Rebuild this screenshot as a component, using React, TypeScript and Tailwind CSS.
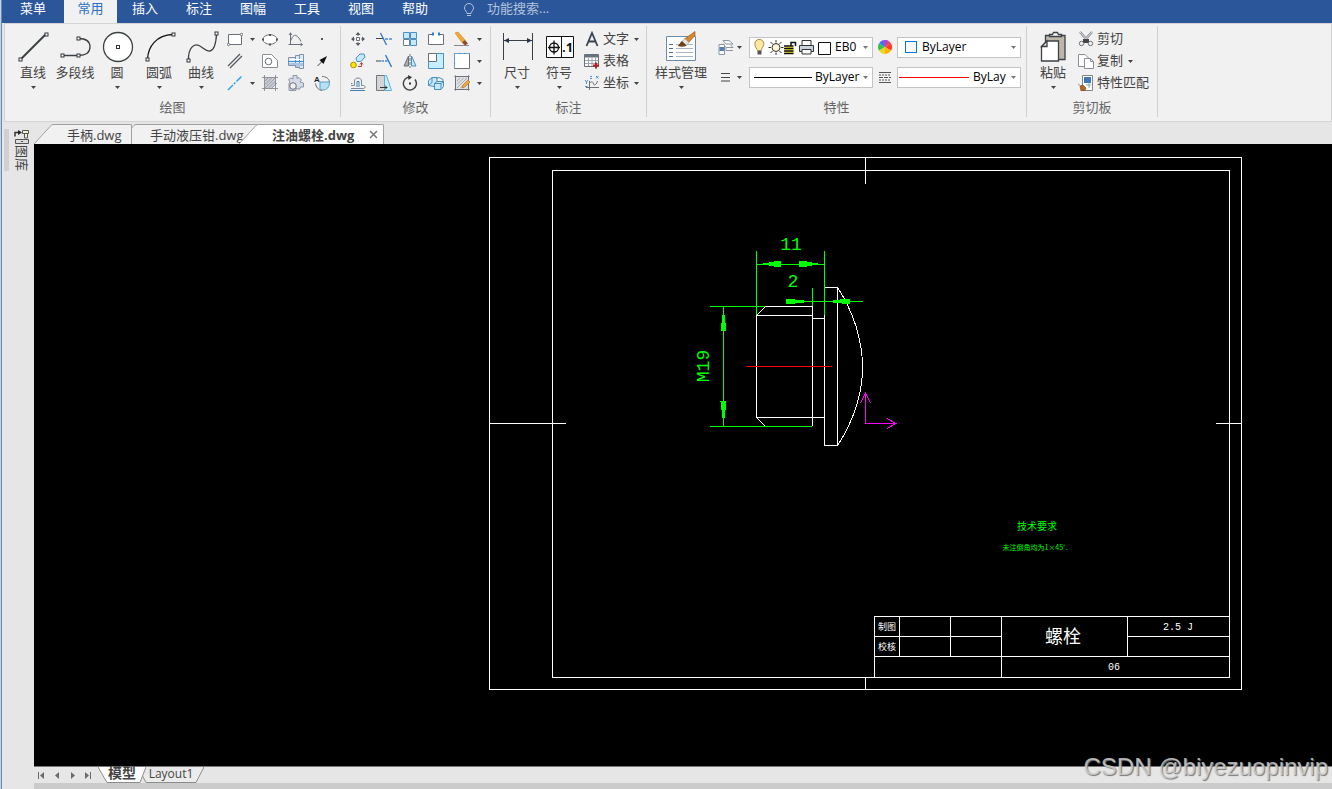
import type { ReactNode } from "react";

const MENUS = ["插入", "标注", "图幅", "工具", "视图", "帮助"];

/* ---------- shared bits ---------- */

function Caret({ className = "text-[#444]" }: { className?: string }) {
  return (
    <svg width="5" height="3" viewBox="0 0 5 3" className={`shrink-0 ${className}`} aria-hidden="true">
      <path d="M0 0h5L2.5 3z" fill="currentColor" />
    </svg>
  );
}

function Small({ children }: { children: ReactNode }) {
  return (
    <svg width="16" height="16" viewBox="0 0 16 16" fill="none" stroke="#6b7078" strokeWidth="1" className="shrink-0">
      {children}
    </svg>
  );
}

function Big({ children }: { children: ReactNode }) {
  return (
    <svg width="32" height="32" viewBox="0 0 32 32" fill="none" stroke="#3c4043" strokeWidth="1.3" className="shrink-0 overflow-visible">
      {children}
    </svg>
  );
}

function Node({ x, y }: { x: number; y: number }) {
  return <rect x={x - 1.5} y={y - 1.5} width="3" height="3" fill="#fff" stroke="#30343a" strokeWidth="1" />;
}

function BigButton({ label, icon, caret = true, wide = false }: { label: string; icon: ReactNode; caret?: boolean; wide?: boolean }) {
  return (
    <button type="button" className={`flex h-[66px] shrink-0 flex-col items-center pt-[3px] ${wide ? "w-[60px]" : "w-[42px]"}`}>
      <Big>{icon}</Big>
      <span className="mt-px h-4 text-[13px] leading-4 whitespace-nowrap">{label}</span>
      <span className="mt-1.5">{caret && <Caret />}</span>
    </button>
  );
}

function IconButton({ name, icon }: { name: string; icon: ReactNode }) {
  return (
    <button type="button" aria-label={name} className="grid h-[22px] w-[26px] place-items-center">
      <Small>{icon}</Small>
    </button>
  );
}

function CaretButton({ name }: { name: string }) {
  return (
    <button type="button" aria-label={name} className="grid h-[22px] w-[9px] place-items-center">
      <Caret />
    </button>
  );
}

function TextButton({ label, icon, caret }: { label: string; icon: ReactNode; caret?: boolean }) {
  return (
    <button type="button" className="flex h-[22px] items-center gap-[3px] text-[13px] leading-5 whitespace-nowrap">
      <Small>{icon}</Small>
      <span className="pb-0.5">{label}</span>
      {caret && (
        <span className="ml-0.5">
          <Caret />
        </span>
      )}
    </button>
  );
}

function Group({ title, className, inset, children }: { title: string; className: string; inset: string; children: ReactNode }) {
  return (
    <section className={`flex shrink-0 flex-col ${className}`}>
      <div className={`mt-1 flex h-[66px] ${inset}`}>{children}</div>
      <h2 className="mt-[3px] text-center text-[13px] leading-5 text-[#666]">{title}</h2>
    </section>
  );
}

function Divider() {
  return <div className="mt-0.5 h-[91px] w-px shrink-0 bg-[#d0d0d0]" />;
}

/* ---------- icons ---------- */

const bigIcons = {
  line: (
    <>
      <path d="M3.5 28.5 29 3" strokeWidth="2" />
      <Node x={3.5} y={28.5} />
      <Node x={29.5} y={3.5} />
    </>
  ),
  polyline: (
    <>
      <path d="M3.5 24.5h16M19.5 7.5c7 0 11.500 2.500 11.500 8.500s-4.500 8.500-11.500 8.500" />
      <Node x={3.5} y={24.5} />
      <Node x={19.5} y={24.5} />
      <Node x={19.5} y={7.5} />
    </>
  ),
  circle: (
    <>
      <circle cx="17" cy="16" r="14.5" fill="#fff" />
      <Node x={17} y={16} />
    </>
  ),
  arc: (
    <>
      <path d="M4.5 28.5C5 15 14 4 29.5 3.5" stroke="#111" />
      <Node x={4.5} y={28.5} />
      <Node x={30.5} y={3.5} />
    </>
  ),
  spline: (
    <>
      <path d="M3.5 29C3 17 9 12 14 14.5S21 21 25 20 31 12 31.5 3.5" />
      <Node x={3.5} y={29.5} />
      <Node x={31.5} y={2.5} />
    </>
  ),
  size: (
    <>
      <path d="M2.5 2v27M31.5 2v27M3 9.5h28" strokeWidth="1" />
      <path d="m3 9.5 5-2.5v5zM31 9.5 26 7v5z" fill="#26354f" stroke="none" />
    </>
  ),
  symbol: (
    <>
      <path d="M3.5 5.5h27v21h-27zM18.500 5.5v21" fill="#fff" stroke="#111" strokeWidth="1" />
      <circle cx="11" cy="16.5" r="4.5" stroke="#111" />
      <path d="M5 16.500h12M11 9.5v14" stroke="#111" />
      <text x="19" y="21" fontSize="13" fontWeight="700" fontFamily="Open Sans, sans-serif" fill="#111" stroke="none">
        .1
      </text>
    </>
  ),
  style: (
    <>
      <path d="M1.5 5.5h29v24h-29z" fill="#fff" stroke="#6a8cab" strokeWidth="1" />
      <path d="M4 13.5h4M4 17.5h4M4 21.5h4M4 25.5h4" stroke="#4f6d96" strokeWidth="1" />
      <path d="M11 13.5h17M11 17.5h17M11 21.5h17M11 25.5h17" stroke="#a9b4c8" strokeWidth="1" />
      <path d="M30 .5v4L23.500 11.500 19.500 8z" fill="#d9862e" stroke="#a55c14" strokeWidth=".7" />
      <path d="m20 7.500 4 4-2.500 3-4.500-4z" fill="#e8e4df" stroke="#8a8a8a" strokeWidth=".6" />
      <path d="m17 10 4.500 4.500c-2 1.500-5 1.500-9 .5C15 13.500 15 11 17 10z" fill="#70401c" stroke="none" />
    </>
  ),
  paste: (
    <>
      <path d="M8.500 4.500h19.500v24H8.500z" fill="#bdb6ab" />
      <path d="M12.500 5.500v-2h3l1-2h4l1 2h3v2z" fill="#fff" />
      <path d="M10 10h11.500v20h-17V15.500z" fill="#fff" />
      <path d="M10 10v5.500H4.500z" fill="#ddd" />
    </>
  ),
};

const drawIcons: { name: string; icon: ReactNode }[][] = [
  [
    {
      name: "椭圆",
      icon: (
        <>
          <ellipse cx="8" cy="8.5" rx="7" ry="4.8" fill="#fff" />
          <path d="M7 3h2v2H7zM7 12.5h2v2H7zM0 7.5h2v2H0zM14 7.5h2v2h-2z" fill="#555" stroke="none" />
        </>
      ),
    },
    { name: "公式曲线", icon: <path d="M2.5 1.5V14M.5 13.5h14M2.500 2 1 4M2.500 2 4 4M12.5 12l2 1.500-2 1.500M3 9.500C4 6 6 3.500 8 4.500s4 3.500 5 6" /> },
    { name: "点", icon: <path d="M7 7h2v2H7z" fill="#555" stroke="none" /> },
  ],
  [
    {
      name: "多边形",
      icon: (
        <>
          <path d="M.5 1.5h9l6 6v7H.5z" fill="#fff" stroke="#8a8e94" />
          <circle cx="6.5" cy="8.5" r="3.3" />
        </>
      ),
    },
    {
      name: "轴孔",
      icon: (
        <>
          <path d="M.5 4.5h7v8h-7zM7.5 2.5h4v12h-4zM11.5 1.5h4v14h-4z" fill="#d8ebf8" stroke="#8393a5" />
          <path d="M1 10h14v3h-3v1H8v-2H1z" fill="#aac6e4" stroke="none" />
          <path d="M0 8.500h16" stroke="#3f8fd6" />
          <path d="M1 6.500h14" stroke="#fff" />
        </>
      ),
    },
    {
      name: "箭头",
      icon: (
        <>
          <path d="m3.5 13 5-5" stroke="#444" />
          <path d="M13 3 5.5 7l4 4z" fill="#111" stroke="none" />
        </>
      ),
    },
  ],
  [
    {
      name: "剖面线",
      icon: (
        <>
          <path d="M2.5 2.5h11v7l-4 4h-7z" fill="#c9ccd1" stroke="none" />
          <path d="m3 6 3-3M3 9.5 9.5 3M3 13 13 3M6.5 13 13 6.5M9 14l6-6" stroke="#9a9fa6" />
          <path d="M2.5 0v16M0 2.5h16M13.5 0v16M0 13.5h16" stroke="#7c8087" strokeWidth=".8" />
        </>
      ),
    },
    {
      name: "构件库",
      icon: (
        <>
          <path d="M5 .5h4v3l2-1 2.500 2.500L12 7l3.500 1v4h-3l-1 2.500L8 13v2.500H1V8l1-1-1.500-2.500 2-1.500L5 4z" fill="#d5dbe6" stroke="#8c97a8" />
          <circle cx="5" cy="11" r="3.3" fill="#f0f0f0" />
        </>
      ),
    },
    {
      name: "局部放大",
      icon: (
        <>
          <path d="M6 7h9.5c0 5-2.500 8-6.500 8-3 0-3-1-3-3z" fill="#b5e0f5" stroke="#5a9fc8" />
          <path d="M8 1.500c4 0 7 2 7.500 5.500M1.500 8.500C2 12 4 15 8 15.500" />
          <text x="0" y="7" fontSize="8" fontWeight="700" fontFamily="Liberation Sans, sans-serif" fill="#222" stroke="none">
            A
          </text>
        </>
      ),
    },
  ],
];

const modifyIcons: { name: string; icon: ReactNode }[][] = [
  [
    {
      name: "平移",
      icon: (
        <>
          <path d="M6.5 6.5h3v3h-3z" fill="#fff" />
          <path d="M8 1 5.5 4h5zM8 15l-2.500-3h5zM1 8l3-2.500v5zM15 8l-3-2.500v5z" fill="#50555c" stroke="none" />
          <path d="M8 3v2M8 11v2M3 8h2M11 8h2" />
        </>
      ),
    },
    {
      name: "裁剪",
      icon: (
        <>
          <path d="M0 7.5h7" stroke="#444" />
          <path d="M9 8h7" stroke="#3f8fe0" strokeDasharray="3 1" strokeWidth="1.5" />
          <path d="m4.500 2 6 12" stroke="#2672c4" strokeWidth="1.3" />
        </>
      ),
    },
    {
      name: "阵列",
      icon: (
        <>
          <path d="M1.500 1.500h6v6h-6zM8.500 1.500h6v6h-6zM8.500 8.500h6v6h-6z" fill="#c5e8fa" stroke="#4a90c2" />
          <path d="M1.500 8.500h6v6h-6z" fill="#fff" stroke="#6b7f94" />
        </>
      ),
    },
    {
      name: "打断",
      icon: (
        <>
          <path d="M4 3.500H.5v10h15v-10H12" fill="#fff" />
          <path d="M4 1.500h2v3H4zM10 1.500h2v3h-2z" fill="#2b7fd0" stroke="none" />
        </>
      ),
    },
    {
      name: "删除",
      icon: (
        <>
          <path d="M0 14.500h15" stroke="#888" />
          <path d="m1 2 3-1 7 8-3 2.500z" fill="#f2a93b" stroke="#d18413" strokeWidth=".6" />
          <path d="m11 9-3 2.500 3 3 3-2z" fill="#8d4b2a" stroke="none" />
        </>
      ),
    },
  ],
  [
    {
      name: "平移复制",
      icon: (
        <>
          <path d="m6 5 4-4h4l1 3-4 4.500H7z" fill="#c5e8fa" stroke="#4a90c2" />
          <circle cx="3.500" cy="12" r="2.800" fill="#ffe500" stroke="#a89000" />
          <path d="M8 13.500h3.500V10M10 11.500l1.500-2 1.500 2" stroke="#b04040" />
        </>
      ),
    },
    {
      name: "延伸",
      icon: (
        <>
          <path d="M0 8h5" stroke="#444" />
          <path d="M5.500 8H12" stroke="#3f8fe0" strokeDasharray="2.5 1" strokeWidth="1.5" />
          <path d="m9.500 2 6 12" stroke="#2672c4" strokeWidth="1.3" />
        </>
      ),
    },
    {
      name: "镜像",
      icon: (
        <>
          <path d="M6.500 3v10H2z" fill="#a9abb0" />
          <path d="M9.500 3v10H14z" fill="#c5e8fa" stroke="#4a90c2" />
          <path d="M8 1v14" strokeDasharray="3 1" />
        </>
      ),
    },
    {
      name: "缩放",
      icon: (
        <>
          <path d="M.5.5h15v15H.5z" fill="#c5effd" stroke="#4a90c2" />
          <path d="M.5.5h8v8h-8z" fill="#fff" stroke="#6b7078" />
        </>
      ),
    },
    {
      name: "分解",
      icon: (
        <>
          <path d="M.5.5h15v15H.5z" fill="#fff" stroke="#6b7078" />
          <path d="M.5 15V.5H15" stroke="#5aa8e0" strokeDasharray="4 1" />
        </>
      ),
    },
  ],
  [
    {
      name: "等距线",
      icon: (
        <>
          <path d="M1 10.500h3.500V6c0-4 7-4 7 0v4.500h2c2 0 2 3 0 3H1" stroke="#7a8794" />
          <path d="M1 8.500h1.500M7 12V6.500h2V12M0 15.500h15" stroke="#3f7fbd" />
        </>
      ),
    },
    {
      name: "拉伸",
      icon: (
        <>
          <path d="M.5.5h8v15h-8z" fill="#d3d5d8" stroke="#777" />
          <path d="M8.500.5h2l5 15h-7z" fill="#c5effd" stroke="#63aedb" />
          <path d="M4 12.500h7M9 10.500l2 2-2 2" stroke="#333" />
        </>
      ),
    },
    {
      name: "旋转",
      icon: (
        <>
          <path d="M8 2a6.500 6.500 0 1 0 5 2.500" stroke="#444" strokeWidth="1.5" />
          <path d="m6 0 4 2.200L6.500 5z" fill="#333" stroke="none" />
          <path d="M7 7.500h2v2H7z" fill="#333" stroke="none" />
        </>
      ),
    },
    {
      name: "三维",
      icon: (
        <>
          <path d="M.5 5.500 4 2.500h5v6l-3 3-5.500-1zM4 2.500v5l-3.500 3" fill="#c5e8fa" stroke="#4a90c2" />
          <path d="m8 3.500 3-1 4 2v2" stroke="#4a90c2" />
          <path d="M6.500 8.500 9 6.500h6.500v5l-2.500 3H6.500zM6.500 8.500H13v6M13 8.500l2.500-2" fill="#c5e8fa" stroke="#4a90c2" />
        </>
      ),
    },
    {
      name: "编辑填充",
      icon: (
        <>
          <path d="M1.500 1.500h13v13h-13z" fill="#dfe1e4" />
          <path d="m3 6 3-3M3 9.500 9.500 3M3 13 13 3M6.500 13 13 6.500" stroke="#a4a9b0" />
          <path d="M0 1.500h16M1.500 0v16M14.500 0v16M0 14.500h16" strokeWidth=".6" />
          <path d="M8 13 9 10l5-5 2 2-5 5z" fill="#f2a93b" stroke="#a86b20" strokeWidth=".6" />
        </>
      ),
    },
  ],
];

/* ---------- ribbon ---------- */

function DrawGroup() {
  return (
    <Group title="绘图" className="w-[335px]" inset="pl-[7px]">
      <BigButton label="直线" icon={bigIcons.line} />
      <BigButton label="多段线" icon={bigIcons.polyline} caret={false} />
      <BigButton label="圆" icon={bigIcons.circle} />
      <BigButton label="圆弧" icon={bigIcons.arc} />
      <BigButton label="曲线" icon={bigIcons.spline} />
      <div className="grid content-start grid-cols-[26px_9px_26px_26px_26px]">
        <IconButton
          name="矩形"
          icon={
            <>
              <path d="M1.500 3.500h13v10h-13z" fill="#fff" />
              <circle cx="1.500" cy="13.500" r="1.200" fill="#fff" />
              <circle cx="14.500" cy="3.500" r="1.200" fill="#fff" />
            </>
          }
        />
        <CaretButton name="更多矩形" />
        {drawIcons[0].map((b) => (
          <IconButton key={b.name} {...b} />
        ))}
        <IconButton name="平行线" icon={<path d="m1 13 12-12M3 15 15 3" stroke="#555a62" strokeWidth="1.3" />} />
        <span />
        {drawIcons[1].map((b) => (
          <IconButton key={b.name} {...b} />
        ))}
        <IconButton name="中心线" icon={<path d="m1 15 14-14" stroke="#25a6e0" strokeWidth="1.4" strokeDasharray="7 1.500 2 1.500" />} />
        <CaretButton name="更多中心线" />
        {drawIcons[2].map((b) => (
          <IconButton key={b.name} {...b} />
        ))}
      </div>
    </Group>
  );
}

function ModifyGroup() {
  return (
    <Group title="修改" className="w-[149px]" inset="pl-1">
      <div className="grid content-start grid-cols-[26px_26px_26px_26px_26px_9px]">
        {modifyIcons.map((row, i) => [
          ...row.map((b) => <IconButton key={b.name} {...b} />),
          <CaretButton key={i} name={`${row[4].name}选项`} />,
        ])}
      </div>
    </Group>
  );
}

function AnnotateGroup() {
  return (
    <Group title="标注" className="w-[155px]" inset="pl-[5px]">
      <BigButton label="尺寸" icon={bigIcons.size} />
      <BigButton label="符号" icon={bigIcons.symbol} />
      <div className="ml-1">
        <TextButton label="文字" caret icon={<path d="M2.500 15 8 2l5.500 13M4.500 10.500h7" stroke="#3a4250" strokeWidth="1.8" />} />
        <TextButton
          label="表格"
          icon={
            <>
              <path d="M.5 1.500h14v12H.5z" fill="#fff" />
              <path d="M1 1.500h13v3H1z" fill="#66727f" stroke="none" />
              <path d="M1 7.500h13M1 10.500h13M4.500 5v8M8 5v8M11.500 5v8" stroke="#9aa3ae" />
              <path d="M9 12.500h6M12 9.500v6" stroke="#b32020" strokeWidth="2" />
            </>
          }
        />
        <TextButton
          label="坐标"
          caret
          icon={
            <>
              <path d="M5.500 6v9M2 12.500h13M5.500 8c2-2 4-1 4 1s3 1 4-3" />
              <path d="m1 5 1.500 2L4 5M2.500 7v2M1 11.500h2.500M6 1.500h2M6 3.500h2M12 1l2.500 2.500M14.500 1 12 3.500" stroke="#4a90d0" />
            </>
          }
        />
      </div>
    </Group>
  );
}

function Combo({ label, value, className, children }: { label: string; value: string; className: string; children?: ReactNode }) {
  return (
    <div className="relative h-[21px] w-[124px]">
      <select aria-label={label} className={`block h-full w-full appearance-none border border-[#c4c4c4] bg-white text-xs text-black ${className}`}>
        <option>{value}</option>
      </select>
      {children}
      <span className="pointer-events-none absolute inset-y-0 right-[5px] flex items-center">
        <Caret className="text-[#777]" />
      </span>
    </div>
  );
}

function LayerIcons() {
  return (
    <svg width="80" height="17" viewBox="0 0 80 17" fill="none" className="pointer-events-none absolute top-0.5 left-[3px]">
      <path d="M3 6a4.500 4.500 0 1 1 8 1.500C10 9 9.500 10 9.500 11.500h-4C5.500 10 3 8.500 3 6z" fill="#ffe9a0" stroke="#8a7430" strokeWidth=".8" />
      <path d="M5.500 12h4v3.500h-4z" fill="#555" />
      <circle cx="24" cy="8.500" r="4" fill="#fff6d5" stroke="#333" />
      <path d="M24 1v2.500M24 13.500V16M16.500 8.500H19M29 8.500h2.500M18.500 3l2 2M27.500 12l2 2M29.500 3l-2 2M20.500 12l-2 2" stroke="#333" />
      <path d="M33 7.500h8.500v7H33z" fill="#e9df20" />
      <path d="M32 7h9.500M32 9.500h9.500M32 12h9.500M32 14.500h9.500M39 7V3.500h4.500V7" stroke="#111" strokeWidth="1.5" />
      <path d="M50 6V1.500h9V6" fill="#fff" stroke="#333" />
      <path d="M47.500 6.500h14v6h-14z" fill="#ccd2da" stroke="#333" />
      <path d="M50 10.500h9V15h-9z" fill="#fff" stroke="#333" />
      <path d="M66.500 3.500h12v12h-12z" fill="#fff" stroke="#111" />
    </svg>
  );
}

function PropertyGroup() {
  return (
    <Group title="特性" className="w-[379px]" inset="pl-1">
      <BigButton label="样式管理" wide icon={bigIcons.style} />
      <div className="mt-2 ml-1.5 grid content-start grid-cols-[18px_14px_124px_24px_124px] items-center gap-y-2">
        <button type="button" aria-label="图层" className="grid place-items-center">
          <Small>
            <path d="M5 1.500h6l4 3.500H8zM5 4.500 8 8.500h7L12.500 6M8 8.500v3h7" fill="#fff" stroke="#8a95a3" />
            <path d="M1 5.500h5.500v10H1z" fill="#fff" stroke="#8a95a3" />
            <path d="M1.500 8H6v4H1.500z" fill="#4f81b5" stroke="none" />
          </Small>
        </button>
        <CaretButton name="图层选项" />
        <Combo label="当前图层" value="EB0" className="pl-[85px] pr-3.5">
          <LayerIcons />
        </Combo>
        <span className="grid place-items-center">
          <svg width="14" height="14" viewBox="0 0 14 14">
            <path d="M7 7 7 0a7 7 0 0 1 6.060 3.500z" fill="#f0435a" />
            <path d="M7 7l6.060-3.500a7 7 0 0 1 0 7z" fill="#ff3b1f" />
            <path d="M7 7l6.060 3.500A7 7 0 0 1 7 14z" fill="#ffb400" />
            <path d="M7 7v7a7 7 0 0 1-6.060-3.500z" fill="#e8d820" />
            <path d="M7 7 .94 10.500a7 7 0 0 1 0-7z" fill="#3fc04a" />
            <path d="M7 7 .94 3.500A7 7 0 0 1 5 .3z" fill="#2f7fe0" />
            <path d="M7 7 4 .7A7 7 0 0 1 10 .7z" fill="#9a4be0" />
          </svg>
        </span>
        <Combo label="颜色" value="ByLayer" className="pl-6 pr-3.5">
          <span className="pointer-events-none absolute top-1 left-2 size-3 border border-[#0a78d1]" />
        </Combo>

        <button type="button" aria-label="线宽" className="grid place-items-center">
          <Small>
            <path d="M3 4.500h9M3 8.500h9M3 12h9" stroke="#444" strokeWidth="1.2" />
          </Small>
        </button>
        <CaretButton name="线宽选项" />
        <Combo label="线型" value="ByLayer" className="pl-[65px] pr-2.5">
          <span className="pointer-events-none absolute top-[10px] left-[5px] h-px w-[58px] bg-black" />
        </Combo>
        <span className="grid place-items-center">
          <svg width="12" height="11" viewBox="0 0 12 11" stroke="#555">
            <path d="M0 .5h12M0 10.500h12" />
            <path d="M0 3h12M0 8h12" strokeDasharray="2 1" />
            <path d="M0 5.500h12" strokeDasharray="4 1" />
          </svg>
        </span>
        <Combo label="线宽样式" value="ByLayer" className="pl-[75px] pr-3.5">
          <span className="pointer-events-none absolute top-[10px] left-0.5 h-px w-[70px] bg-[#f00]" />
        </Combo>
      </div>
    </Group>
  );
}

function ClipboardGroup() {
  return (
    <Group title="剪切板" className="w-[130px]" inset="pl-[5px]">
      <BigButton label="粘贴" icon={bigIcons.paste} />
      <div className="ml-1">
        <TextButton
          label="剪切"
          icon={
            <>
              <path d="m2 1 8 9M14 1l-8 9" stroke="#7a7f86" strokeWidth="2.200" />
              <path d="m2 1 8 9M14 1l-8 9" stroke="#fff" strokeWidth=".8" />
              <path d="M5 8h6v4H5z" fill="#444" stroke="none" />
              <circle cx="3.500" cy="12.500" r="2.200" />
              <circle cx="12.500" cy="12.500" r="2.200" />
            </>
          }
        />
        <TextButton
          label="复制"
          caret
          icon={
            <>
              <path d="M.5 1.500H7l3 3v9H.5z" fill="#fff" stroke="#8a8e94" />
              <path d="M6.500 5.500h6l3 3v7h-9z" fill="#fff" stroke="#8a8e94" />
              <path d="M12.500 5.500v3h3" stroke="#8a8e94" />
            </>
          }
        />
        <TextButton
          label="特性匹配"
          icon={
            <>
              <path d="M4.500.5h10v15h-10z" fill="#fff" stroke="#7d8792" />
              <path d="M6 2h7v6H6z" fill="#3f76b5" stroke="none" />
              <path d="M8 10h5M11 8v5" stroke="#8aa" />
              <path d="m2 11 3-1 3 3-1 2.500-4 .5z" fill="#b5651d" stroke="#7a4010" strokeWidth=".6" />
              <path d="m0 9 3 2" stroke="#999" />
            </>
          }
        />
      </div>
    </Group>
  );
}

/* ---------- document area ---------- */

function DocTab({ label, className, body, active }: { label: string; className: string; body: string; active?: boolean }) {
  return (
    <div className={`relative flex h-5 ${className}`}>
      <svg width="19" height="20" viewBox="0 0 19 20" className="shrink-0">
        <path d="M0 20 17 1.500Q18 .5 19 .5V20z" fill={active ? "#ffffff" : "#f1f1f1"} />
        <path d="M0 20 17 1.500Q18 .5 19 .5" fill="none" stroke="#a0a0a0" />
      </svg>
      <div className={`flex items-center rounded-tr-xs border-t border-r border-[#a0a0a0] text-[13px] leading-[18px] whitespace-nowrap ${body}`}>
        <button type="button" className={active ? "font-bold" : ""}>
          {label}
        </button>
        {active && (
          <button type="button" aria-label="关闭" className="mr-[5px] ml-auto">
            <svg width="9" height="9" viewBox="0 0 9 9" stroke="#777" strokeWidth="1.5">
              <path d="m1 1 7 7M8 1 1 8" />
            </svg>
          </button>
        )}
      </div>
    </div>
  );
}

function Drawing() {
  return (
    <svg viewBox="34 144 1298 622" className="block min-h-0 w-full flex-1 bg-black" fill="none" strokeWidth="1" shapeRendering="crispEdges">
      {/* sheet frame, centring marks and title block */}
      <g stroke="#fff">
        <path d="M489.500 157.500h752v532h-752zM552.500 170.500h677v507h-677z" />
        <path d="M865.500 157v27M865.500 678v11M489 423.500h77M1216 423.500h26" />
        <path d="M874.500 677V616.500H1229M899.500 616v40M950.500 616v40M1001.500 616v61M1127.500 616v40M874 636.500h127M1127 636.500h102M874 656.500h355" />
      </g>

      {/* bolt */}
      <g stroke="#fff">
        <path d="M765 306.500h47.500V426M756.500 315v102M756 315.500h56M756 417.500h68M812 318.500h12M756.500 315.500l9-9M756.500 417.500l9 9" />
        <path d="M824.500 287.500h13v158h-13z" />
        <path d="M838 288c10 16 24 42 24.500 78S848 429 838 445" />
      </g>
      <path d="M746 366.500h86" stroke="#f00" />

      {/* dimensions */}
      <path
        d="M756.500 251v64M824.500 251v64M756 264.500h68M812.500 288v18M786 301.500h77M710 306.500h55M710 426.500h102M723.500 306v120"
        stroke="#0f0"
      />
      <g fill="#0f0">
        <path d="M763 263h6v-1h5v-1h7v6h-7v-1h-5v-1h-6zM818 263h-6v-1h-5v-1h-8v6h8v-1h5v-1h6z" />
        <path d="M786 299h9v1h9v3h-9v1h-9zM833 300h7v-1h10v5h-8v-1h-9z" />
        <path d="M722 315h3v8h1v8h-5v-8h1zM720 401h6v9h-1v8h-3v-8h-1v-8h-1z" />
      </g>
      <g fill="#0f0" fontFamily="Liberation Mono, monospace" fontSize="18" textAnchor="middle">
        <text x="791" y="250">
          11
        </text>
        <text x="793" y="287">
          2
        </text>
        <text transform="translate(709 366) rotate(-90)">M19</text>
      </g>

      {/* user coordinate marker */}
      <path d="M865.500 393v30.500H896M860.500 403l5-10 5 10M887 418.500l9 5-9 5" stroke="#f0f" />

      <g fontFamily="Noto Sans CJK SC, sans-serif" textAnchor="middle">
        <text x="1037" y="530" fontSize="10" fill="#0f0">
          技术要求
        </text>
        <text x="1035" y="550" fontSize="7" fill="#0f0">
          未注倒角均为1×45°.
        </text>
        <text x="887" y="630" fontSize="9" fill="#fff">
          制图
        </text>
        <text x="887" y="650" fontSize="9" fill="#fff">
          校核
        </text>
        <text x="1063" y="643" fontSize="18" fill="#fff">
          螺栓
        </text>
      </g>
      <g fill="#fff" fontFamily="Liberation Mono, monospace" fontSize="10" textAnchor="middle">
        <text x="1178" y="630">
          2.5 J
        </text>
        <text x="1114" y="670">
          06
        </text>
      </g>
    </svg>
  );
}

function NavButton({ name, d }: { name: string; d: string }) {
  return (
    <button type="button" aria-label={name} className="grid w-4 place-items-center">
      <svg width="8" height="7" viewBox="0 0 8 7" fill="#6b6b6b">
        <path d={d} />
      </svg>
    </button>
  );
}

function LayoutBar() {
  return (
    <nav className="flex h-[17px] shrink-0 border-t border-[#777] bg-[#e6e6e6] text-xs leading-4">
      <div className="flex w-16 pr-0.5">
        <NavButton name="第一页" d="M0 0h1v7H0zM6 0v7L2 3.500z" />
        <NavButton name="上一页" d="M6 0v7L2 3.500z" />
        <NavButton name="下一页" d="M2 0v7l4-3.500z" />
        <NavButton name="最后一页" d="M1 0v7l4-3.500zM6 0h1v7H6z" />
      </div>
      <button type="button" className="relative z-10 h-4 w-[48px] pb-1 text-[14px] leading-3 font-bold">
        <svg width="48" height="16" viewBox="0 0 48 16" className="absolute inset-0">
          <path d="M0 0h48l-6 15.500H9z" fill="#fff" />
          <path d="m0 0 9 15.500h33L48 0" fill="none" stroke="#8c8c8c" />
        </svg>
        <span className="relative">模型</span>
      </button>
      <button type="button" className="relative -ml-1 h-4 w-[62px] pr-1 pb-0.5 leading-[14px]">
        <svg width="62" height="16" viewBox="0 0 62 16" className="absolute inset-0">
          <path d="m0 8 4 7.500h50L62 0" fill="#ececec" stroke="#8c8c8c" />
        </svg>
        <span className="relative">Layout1</span>
      </button>
    </nav>
  );
}

export default function App() {
  return (
    <div className="relative flex h-screen flex-col overflow-hidden border-l border-[#bcd3ee] bg-[#e6e6e6] font-['Open_Sans','Noto_Sans_CJK_SC',sans-serif] text-[#444]">
      <header className="flex h-[23px] shrink-0 border-l border-[#6f87a8] bg-[#2b579a] text-[13px] leading-4 text-white">
        <button type="button" className="w-[62px] pb-[7px]">
          菜单
        </button>
        <button type="button" className="w-[53px] bg-[#f1f1f1] pb-[7px] text-[#2a6fc9]">
          常用
        </button>
        <div className="ml-px flex">
          {MENUS.map((m) => (
            <button type="button" key={m} className="w-[54px] pb-[7px]">
              {m}
            </button>
          ))}
        </div>
        <label className="ml-[21px] flex items-start gap-3 text-[#b4c3dc]">
          <svg width="12" height="15" viewBox="0 0 12 15" fill="none" stroke="#b4c3dc" className="mt-[3px]" aria-hidden="true">
            <path d="M4 10.500C4 8.500 1.500 7.500 1.500 5a4.500 4.500 0 0 1 9 0c0 2.500-2.500 3.500-2.500 5.500zM4 12.500h4" />
          </svg>
          <input type="text" aria-label="功能搜索" placeholder="功能搜索..." className="h-4 w-32 bg-transparent outline-none placeholder:text-[#b4c3dc]" />
        </label>
      </header>

      <div className="flex h-[99px] shrink-0 border-l border-[#6f87a8] bg-[#e6e6e6] pl-0.5">
        <div className="flex flex-1 border border-[#d4d4d4] bg-[#f1f1f1]">
          <DrawGroup />
          <Divider />
          <ModifyGroup />
          <Divider />
          <AnnotateGroup />
          <Divider />
          <PropertyGroup />
          <Divider />
          <ClipboardGroup />
          <Divider />
        </div>
      </div>

      <div className="flex min-h-0 flex-1 border-l border-[#6f87a8]">
        <aside className="flex w-8 shrink-0 items-start gap-[5px] pt-[7px] pl-0.5">
          <div className="h-[42px] w-[5px] bg-[#d0d0d0]" />
          <button type="button" className="flex w-4 flex-col items-center text-[13px] leading-4">
            <svg width="16" height="16" viewBox="0 0 16 16" fill="none" stroke="#333" className="shrink-0">
              <path d="M1 7.500V3.500h4" strokeWidth="1.5" />
              <path d="m4 1 4 2.500L4 6z" fill="#222" stroke="none" />
              <path d="M8.500 1.500h6v3h-6zM10.500 4.500V9h3V4.500" fill="#f2f3d2" stroke="#555" />
              <path d="M1.500 10.500h13v4h-13zM7 12.500h2" fill="#ddd" stroke="#555" />
            </svg>
            <span className="shrink-0 whitespace-nowrap [text-orientation:sideways] [writing-mode:vertical-rl]">图库</span>
          </button>
        </aside>

        <main className="flex min-w-0 flex-1 flex-col">
          <div className="flex h-[22px] shrink-0 items-end">
            <DocTab label="手柄.dwg" className="z-20" body="w-[79px] bg-[#f1f1f1] pl-3.5" />
            <DocTab label="手动液压钳.dwg" className="z-10 -ml-[15px]" body="w-[122px] bg-[#f1f1f1] pl-3.5" />
            <DocTab label="注油螺栓.dwg" active className="z-30 -ml-[19px]" body="w-[126px] bg-white pl-3.5" />
          </div>
          <Drawing />
          <LayoutBar />
          <div className="h-1.5 shrink-0 bg-[#cbcbcb]" />
        </main>
      </div>

      <p className="pointer-events-none absolute right-1 bottom-2 font-['Liberation_Sans',sans-serif] text-[24px] leading-7 text-[#d4d4d4]/80 [text-shadow:1px_1px_1px_#777]">
        CSDN @biyezuopinvip
      </p>
    </div>
  );
}
